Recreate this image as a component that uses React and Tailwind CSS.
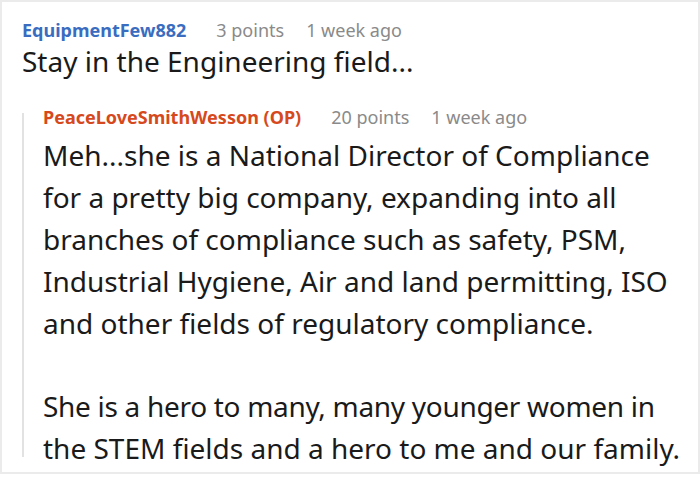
export default function App() {
  return (
    <div className="w-[700px] h-[478px] bg-white" style={{ fontFamily: '"Noto Sans", "Open Sans", sans-serif' }}>
      <div className="h-[474px] border-2 border-[#ebebeb] pl-5 pt-[14px] overflow-hidden">
        {/* parent comment */}
        <div className="flex items-baseline text-[18px] leading-[28px]">
          <span className="font-bold text-[#3a6dbf]">EquipmentFew882</span>
          <span className="ml-[30px] text-[#8a8a8a]">3 points</span>
          <span className="ml-[22px] text-[#8a8a8a]">1 week ago</span>
        </div>
        <p className="text-[28px] leading-[26px] text-[#1a1a1a] mt-[4px]">Stay in the Engineering field...</p>

        {/* reply */}
        <div className="flex mt-[29px]">
          <div className="w-[2px] bg-[#e2e2e2] mt-[10px] mb-[12px]" />
          <div className="pl-[19px]">
            <div className="flex items-baseline text-[18px] leading-[28px]">
              <span className="font-bold text-[#d6491d]">PeaceLoveSmithWesson (OP)</span>
              <span className="ml-[30px] text-[#8a8a8a]">20 points</span>
              <span className="ml-[22px] text-[#8a8a8a]">1 week ago</span>
            </div>
            <div className="text-[28px] leading-[42px] text-[#1a1a1a] mt-[3px] whitespace-nowrap">
              <p>
                Meh...she is a National Director of Compliance<br />
                for a pretty big company, expanding into all<br />
                branches of compliance such as safety, PSM,<br />
                Industrial Hygiene, Air and land permitting, ISO<br />
                and other fields of regulatory compliance.
              </p>
              <p className="mt-[41px]">
                <span className="tracking-[-0.3px]">She is a hero to many, many younger women in</span><br />
                the STEM fields and a hero to me and our family.
              </p>
            </div>
          </div>
        </div>
      </div>
    </div>
  )
}
